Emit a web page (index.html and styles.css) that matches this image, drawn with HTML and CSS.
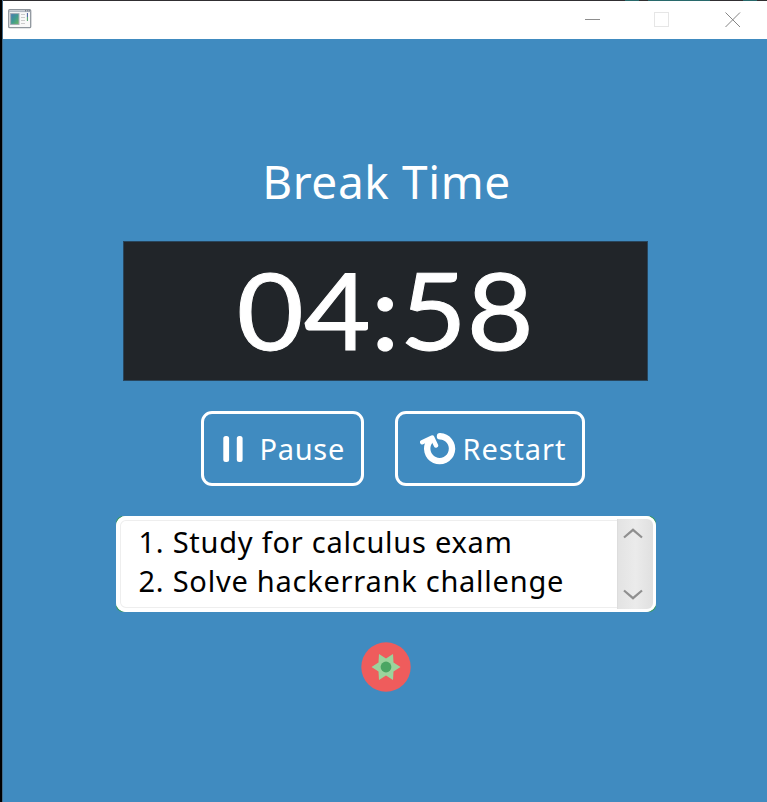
FILE: index.html
```html
<!DOCTYPE html>
<html lang="en">
<head>
<meta charset="utf-8">
<title>Break Time</title>
<link rel="stylesheet" href="styles.css">
</head>
<body>
<div class="window">
  <header class="titlebar">
    <svg class="app-icon" width="24" height="20" viewBox="0 0 24 20">
      <defs><linearGradient id="pic" x1="0" y1="0" x2="1" y2="1"><stop offset="0" stop-color="#4b78b4"/><stop offset=".5" stop-color="#3f9a90"/><stop offset="1" stop-color="#6cb85c"/></linearGradient></defs>
      <rect x=".7" y=".7" width="22" height="18" rx="1" fill="#f8f8f8" stroke="#8f969d" stroke-width="1.3"/>
      <path d="M1 2.3h21.4" stroke="#b3bac4" stroke-width="1.6"/>
      <path d="M17 1.8h1.2m1 0h1.2m.8 0h1" stroke="#59616d"/>
      <rect x="2.6" y="4.6" width="8.4" height="10.8" fill="url(#pic)" stroke="#a3abb5" stroke-width="1"/>
      <path d="M13 5.5h4M13 8.5h4M13 11.5h4M13 14.5h4" stroke="#ccc" stroke-width="1.2"/>
      <path d="M19.4 4v4" stroke="#405b9b"/><path d="M19.4 8v4" stroke="#4ca367"/>
    </svg>
    <svg class="controls" width="160" height="20" viewBox="0 0 160 20" fill="none">
      <path d="M2 10.500h15" stroke="#8d8d8d"/>
      <rect x="71.500" y="3.500" width="14" height="14" stroke="#e6e6e6"/>
      <path d="M142.500 3.500l14.500 14.500M157 3.500l-14.500 14.500" stroke="#858585"/>
    </svg>
  </header>
  <main class="content">
    <h1 class="heading"><span>Break Time</span></h1>
    <div class="timer"><span>04:58</span></div>
    <div class="actions">
      <button class="btn pause">
        <svg width="22" height="28" viewBox="0 0 22 28"><rect x="1.300" y="1" width="5.800" height="26" rx="2.500" fill="#fff"/><rect x="14.800" y="1" width="5.800" height="26" rx="2.500" fill="#fff"/></svg>
        <span>Pause</span>
      </button>
      <button class="btn restart">
        <svg width="38" height="34" viewBox="0 0 38 34" fill="none" stroke="#fff" stroke-linecap="round" stroke-linejoin="round"><path d="M20 4.300A12.400 12.400 0 1 1 9.500 9.500" stroke-width="6.400"/><path d="M2.200 10.300L12.200 5.500L16 13.500" stroke-width="4.400"/></svg>
        <span>Restart</span>
      </button>
    </div>
    <div class="frame">
      <section class="tasks">
        <ol class="list"><li>1. Study for calculus exam</li><li>2. Solve hackerrank challenge</li></ol>
        <div class="scroll">
          <svg width="20" height="11" viewBox="0 0 20 11"><path d="M1 9.500L10 1.800L19 9.500" /></svg>
          <svg width="20" height="11" viewBox="0 0 20 11"><path d="M1 1.500L10 9.200L19 1.500" /></svg>
        </div>
      </section>
    </div>
    <svg class="tomato" width="50" height="50" viewBox="0 0 50 50">
      <circle cx="25" cy="25" r="24.700" fill="#ef5c5c"/>
      <path d="M18 12L25 16.500L32 12L32.500 20.500L39.500 25L32.500 29.500L32 38L25 33.500L18 38L17.500 29.500L10.500 25L17.500 20.500Z" fill="#9bd49c"/>
      <circle cx="25" cy="25" r="5.400" fill="#4ba663"/>
    </svg>
  </main>
</div>
</body>
</html>
```
FILE: styles.css
```css
* { box-sizing: border-box; }
body { margin: 0; height: 802px; overflow: hidden; background: linear-gradient(90deg, #000 2px, #456d8b 2px, #456d8b 3px, #302e31 3px, #302e31 625px, #28696b 625px, #28696b 639px, #302e31 639px, #302e31 648px, #28696b 648px, #28696b 710px, #302e31 710px, #302e31 743px, #28696b 743px, #28696b 757px, #302e31 757px); font-family: "Noto Sans", sans-serif; }
.window { height: 802px; padding: 1px 0 0 3px; display: flex; flex-direction: column; }
.titlebar { height: 38px; background: #fff; display: flex; justify-content: space-between; padding: 8px 24px 0 5px; flex: none; }
.content { flex: 1; background: #408bc0; display: flex; flex-direction: column; align-items: center; padding-top: 115px; }
.heading { margin: 0; height: 54px; line-height: 54px; font-weight: 400; font-size: 46px; color: #fff; white-space: nowrap; letter-spacing: .6px; padding-left: 3px; }
.timer { margin: 33px 0 0 1px; width: 525px; height: 140px; background: #212529; color: #fff; display: flex; justify-content: center; align-items: center; font-family: Lato, sans-serif; font-size: 106px; line-height: 140px; border: 1px solid #28455c; }
.timer span { display: block; margin-top: -4px; transform: scaleX(1.090); -webkit-text-stroke: 1px #fff; }
.actions { display: flex; gap: 31px; margin: 30px 0 0 15px; }
.btn { display: flex; align-items: center; height: 75px; border: 3px solid #fff; border-radius: 11px; background: none; color: #fff; font: 400 29px/36px "Noto Sans", sans-serif; padding: 0; white-space: nowrap; }
.pause { width: 163px; padding-left: 18px; gap: 16px; letter-spacing: .7px; }
.restart { width: 190px; padding-left: 22px; gap: 5px; letter-spacing: .9px; }
.frame { width: 540px; height: 96px; margin: 30px 0 0 1px; background: #3d9b62; border-radius: 7px; }
.tasks { height: 96px; background: #fff; border-radius: 10px; padding: 3px; display: flex; box-shadow: inset 0 0 0 4px #fff, inset 0 0 0 5px #eee; }
.list { list-style: none; margin: 0; flex: 1; padding: 3px 0 0 20px; color: #000; font-size: 29px; line-height: 39px; letter-spacing: .760px; white-space: nowrap; }
.scroll { width: 36px; height: 90px; border-left: 1px solid #ddd; border-radius: 0 6px 6px 0; background: linear-gradient(90deg, #e3e3e3, #ebebeb 50%, #e0e0e0); display: flex; flex-direction: column; justify-content: space-between; align-items: center; padding: 9px 5px 9px 0; }
.scroll path { fill: none; stroke: #8f8f8f; stroke-width: 2.200; }
.tomato { margin: 30px 0 0 2px; }
```
